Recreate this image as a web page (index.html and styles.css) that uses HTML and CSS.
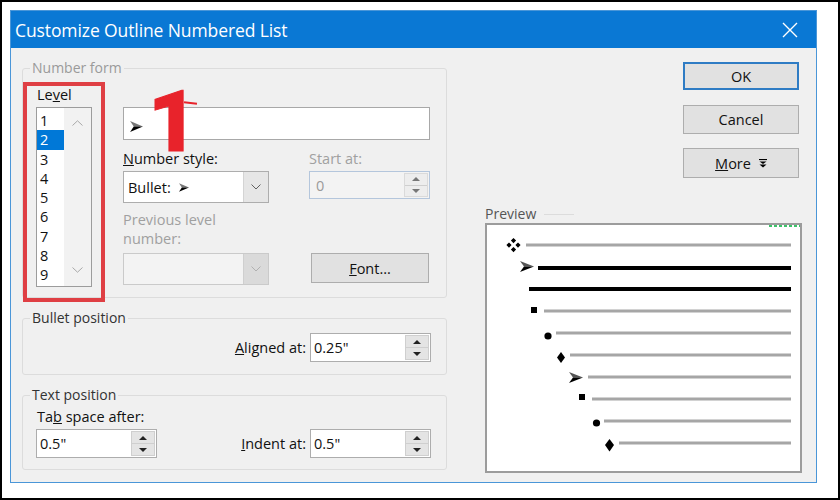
FILE: index.html
```html
<!DOCTYPE html>
<html lang="en">
    <head>
        <meta charset="utf-8">
        <title>Customize Outline Numbered List</title>
        <link rel="stylesheet" href="styles.css">
    </head>
    <body>
        <div class="frame">
        <div class="dialog">

            <div class="titlebar">
                <span class="title">Customize Outline Numbered List</span>
                <svg class="close" width="16" height="16" viewBox="0 0 16 16">
                    <path d="M1 1 L15 15 M15 1 L1 15" stroke="#fff" stroke-width="1.4" fill="none"/>
                </svg>
            </div>

            <div class="dlg-body">
                <div class="left">

                    <fieldset class="group number-form">
                        <legend class="off">Number form</legend>
                        <div class="nf-row">
                            <div class="level-box">
                                <div class="lbl">Le<u>v</u>el</div>
                                <div class="listbox">
                                    <div class="items">
                                        <div>1</div>
                                        <div class="sel">2</div>
                                        <div>3</div>
                                        <div>4</div>
                                        <div>5</div>
                                        <div>6</div>
                                        <div>7</div>
                                        <div>8</div>
                                        <div>9</div>
                                    </div>
                                    <div class="vscroll">
                                        <svg width="11" height="6" viewBox="0 0 11 6"><path d="M0.5 5.5 L5.5 0.8 L10.5 5.5" stroke="#a8a8a8" fill="none"/></svg>
                                        <svg width="11" height="6" viewBox="0 0 11 6"><path d="M0.5 0.5 L5.5 5.2 L10.5 0.5" stroke="#a8a8a8" fill="none"/></svg>
                                    </div>
                                </div>
                            </div>

                            <div class="nf-form">
                                <div class="textbox">
                                    <svg class="arrow" width="13" height="11" viewBox="0 0 14 12">
                                        <polygon points="0,0 14,6 4,6" fill="#777"/>
                                        <polygon points="4,6 14,6 0,12" fill="#000"/>
                                    </svg>
                                </div>
                                <div class="nf-grid">
                                    <div class="lbl"><u>N</u>umber style:</div>
                                    <div class="lbl off">Start at:</div>

                                    <div class="combo">
                                        <span class="combo-val">Bullet:
                                            <svg class="arrow" width="10" height="9" viewBox="0 0 14 12">
                                                <polygon points="0,0 14,6 4,6" fill="#777"/>
                                                <polygon points="4,6 14,6 0,12" fill="#000"/>
                                            </svg>
                                        </span>
                                        <span class="drop">
                                            <svg width="10" height="6" viewBox="0 0 10 6"><path d="M0.5 0.5 L5 5 L9.5 0.5" stroke="#606060" fill="none"/></svg>
                                        </span>
                                    </div>
                                    <div class="spin off-spin">
                                        <span class="val">0</span>
                                        <span class="spin-btns"><span class="up"></span><span class="dn"></span></span>
                                    </div>

                                    <div class="lbl off two">Previous level<br>number:</div>
                                    <div></div>

                                    <div class="combo off-combo">
                                        <span class="combo-val"></span>
                                        <span class="drop">
                                            <svg width="10" height="6" viewBox="0 0 10 6"><path d="M0.5 0.5 L5 5 L9.5 0.5" stroke="#b0b0b0" fill="none"/></svg>
                                        </span>
                                    </div>
                                    <div class="btn font-btn"><span><u>F</u>ont...</span></div>
                                </div>
                            </div>
                            <span class="mark">1</span>
                        </div>
                    </fieldset>

                    <fieldset class="group bullet-pos">
                        <legend>Bullet position</legend>
                        <div class="row-right">
                            <span class="lbl"><u>A</u>ligned at:</span>
                            <div class="spin">
                                <span class="val">0.25&quot;</span>
                                <span class="spin-btns"><span class="up"></span><span class="dn"></span></span>
                            </div>
                        </div>
                    </fieldset>

                    <fieldset class="group text-pos">
                        <legend>Text position</legend>
                        <div class="tp-inner">
                            <div class="lbl tab-lbl">Ta<u>b</u> space after:</div>
                            <div class="tp-row">
                                <div class="spin">
                                    <span class="val">0.5&quot;</span>
                                    <span class="spin-btns"><span class="up"></span><span class="dn"></span></span>
                                </div>
                                <span class="lbl indent-lbl"><u>I</u>ndent at:</span>
                                <div class="spin">
                                    <span class="val">0.5&quot;</span>
                                    <span class="spin-btns"><span class="up"></span><span class="dn"></span></span>
                                </div>
                            </div>
                        </div>
                    </fieldset>

                </div>

                <div class="right">
                    <div class="btns">
                        <div class="btn ok">OK</div>
                        <div class="btn cancel">Cancel</div>
                        <div class="btn more"><span><u>M</u>ore</span>
                            <svg width="8" height="9" viewBox="0 0 8 9">
                                <path d="M0 0.5 H8" stroke="#000" stroke-width="1.2"/>
                                <path d="M0.5 2.5 L4 5 L7.5 2.5 Z M0.5 5.5 L4 8.5 L7.5 5.5 Z" fill="#000"/>
                            </svg>
                        </div>
                    </div>

                    <div class="preview-lbl">Preview<span class="pv-line"></span></div>
                    <div class="preview">
                        <svg width="313" height="246" viewBox="2 2 313 246">
                            <defs>
                                <g id="dart">
                                    <polygon points="0,0 14,5.5 4,5.5" fill="#555"/>
                                    <polygon points="4,5.5 14,5.5 0,11" fill="#000"/>
                                </g>
                            </defs>
                            <path d="M284 3 H316" stroke="#3cc26a" stroke-width="2" stroke-dasharray="3 2"/>

                            <g fill="#000">
                                <path d="M28.5 15 l2.6 2.6 -2.6 2.6 -2.6 -2.6z M28.5 24 l2.6 2.6 -2.6 2.6 -2.6 -2.6z M24 19.5 l2.6 2.6 -2.6 2.6 -2.6 -2.6z M33 19.5 l2.6 2.6 -2.6 2.6 -2.6 -2.6z"/>
                            </g>
                            <line x1="41" y1="22" x2="306" y2="22" stroke="#a6a6a6" stroke-width="3"/>

                            <use href="#dart" x="35" y="38"/>
                            <line x1="53" y1="45" x2="306" y2="45" stroke="#000" stroke-width="4"/>

                            <line x1="44" y1="66" x2="306" y2="66" stroke="#000" stroke-width="4"/>

                            <rect x="46" y="84" width="6" height="6" fill="#000"/>
                            <line x1="59" y1="88" x2="306" y2="88" stroke="#a6a6a6" stroke-width="3"/>

                            <circle cx="63" cy="113" r="3.6" fill="#000"/>
                            <line x1="71" y1="110" x2="306" y2="110" stroke="#a6a6a6" stroke-width="3"/>

                            <path d="M76 129 L80 134.5 L76 140 L72 134.5 Z" fill="#000"/>
                            <line x1="85" y1="132" x2="306" y2="132" stroke="#a6a6a6" stroke-width="3"/>

                            <use href="#dart" x="84" y="149"/>
                            <line x1="103" y1="154" x2="306" y2="154" stroke="#a6a6a6" stroke-width="3"/>

                            <rect x="94" y="171" width="6" height="6" fill="#000"/>
                            <line x1="107" y1="176" x2="306" y2="176" stroke="#a6a6a6" stroke-width="3"/>

                            <circle cx="111.5" cy="200" r="3.6" fill="#000"/>
                            <line x1="119" y1="198" x2="306" y2="198" stroke="#a6a6a6" stroke-width="3"/>

                            <path d="M124.5 216 L129 222 L124.5 228.5 L120 222 Z" fill="#000"/>
                            <line x1="134" y1="220" x2="306" y2="220" stroke="#a6a6a6" stroke-width="3"/>
                        </svg>
                    </div>
                </div>
            </div>

        </div>
        </div>
    </body>
</html>
```

FILE: styles.css
```css
* {
    box-sizing: border-box;
}
html, body {
    margin: 0;
    padding: 0;
    background: #fff;
}
body {
    font-family: "Open Sans", "Noto Sans", sans-serif;
    font-size: 14.5px;
    color: #111;
}

.frame {
    width: 840px;
    height: 500px;
    border: 2px solid #000;
    padding: 8px;
    background: #fff;
}

.dialog {
    width: 807px;
    height: 473px;
    border: 1px solid #4a96d8;
    background: #f0f0f0;
    display: flex;
    flex-direction: column;
}

.titlebar {
    height: 37px;
    background: #0a78d4;
    color: #fff;
    display: flex;
    align-items: center;
    justify-content: space-between;
    padding: 0 18px 0 4px;
}
.title {
    font-size: 17.5px;
    letter-spacing: -0.1px;
}

.dlg-body {
    flex: 1;
    display: flex;
    padding: 12px 14px 0 11px;
}

.left {
    width: 425px;
}
.right {
    margin-left: auto;
    width: 317px;
    display: flex;
    flex-direction: column;
}

/* group boxes */
.group {
    margin: 0;
    padding: 0;
    border: 1px solid #dcdcdc;
    border-radius: 3px;
    min-width: 0;
}
.group legend {
    margin-left: 7px;
    padding: 0 2px;
    font-size: 14px;
    line-height: 16px;
    color: #333;
}
.group legend.off {
    color: #9a9a9a;
}

.lbl {
    line-height: 18px;
    white-space: nowrap;
}
.off {
    color: #a0a0a0;
}

/* number form */
.nf-row {
    display: flex;
    align-items: flex-start;
    margin-top: 6px;
    position: relative;
}
.level-box {
    border: 4px solid #df3f44;
    padding: 0 9px 11px 9px;
    margin-bottom: -5px;
}
.level-box .lbl {
    padding-left: 1px;
    margin-bottom: 3px;
}
.listbox {
    width: 56px;
    height: 180px;
    border: 1px solid #9c9c9c;
    background: #fff;
    display: flex;
}
.items {
    width: 27px;
    padding-top: 3px;
}
.items div {
    height: 19.25px;
    line-height: 19.25px;
    padding-left: 3px;
}
.items .sel {
    background: #0078d7;
    color: #fff;
}
.vscroll {
    flex: 1;
    background: #f2f2f2;
    display: flex;
    flex-direction: column;
    justify-content: space-between;
    align-items: center;
    padding: 12px 0 13px;
}

.nf-form {
    width: 307px;
    margin-left: 18px;
    margin-top: 25px;
}
.textbox {
    height: 33px;
    border: 1px solid #a8a8a8;
    background: #fff;
    padding: 9px 0 0 6px;
}
.arrow {
    display: inline-block;
}

.nf-grid {
    display: grid;
    grid-template-columns: 146px 121px;
    column-gap: 40px;
    margin-top: 10px;
    align-items: start;
}
.nf-grid .lbl {
    margin-bottom: 3px;
}
.nf-grid .two {
    line-height: 19px;
    margin-top: 7px;
    margin-bottom: 5px;
}

.combo {
    height: 32px;
    border: 1px solid #adadad;
    background: #fff;
    display: flex;
}
.combo-val {
    flex: 1;
    display: flex;
    align-items: center;
    gap: 8px;
    padding-left: 4px;
}
.drop {
    width: 25px;
    background: #e6e6e6;
    border-left: 1px solid #d4d4d4;
    display: flex;
    align-items: center;
    justify-content: center;
}
.off-combo {
    border-color: #cacaca;
    background: #f3f3f3;
}
.off-combo .drop {
    background: #dadada;
    border-left-color: #cfcfcf;
}

/* spin boxes */
.spin {
    width: 121px;
    height: 29px;
    border: 1px solid #adadad;
    background: #fff;
    display: flex;
}
.spin .val {
    flex: 1;
    padding-left: 3px;
    line-height: 27px;
}
.spin-btns {
    width: 24px;
    margin: 1px;
    background: #e4e4e4;
    border: 1px solid #cfcfcf;
    display: flex;
    flex-direction: column;
}
.spin-btns span {
    flex: 1;
    display: flex;
    align-items: center;
    justify-content: center;
}
.spin-btns .up {
    border-bottom: 1px solid #cfcfcf;
}
.spin-btns .up::after {
    content: "";
    border-left: 4px solid transparent;
    border-right: 4px solid transparent;
    border-bottom: 4px solid #222;
}
.spin-btns .dn::after {
    content: "";
    border-left: 4px solid transparent;
    border-right: 4px solid transparent;
    border-top: 4px solid #222;
}
.off-spin {
    height: 28px;
    border-color: #b4c6dc;
    background: #f3f3f3;
}
.off-spin .val {
    color: #9a9a9a;
    padding-left: 6px;
}
.off-spin .spin-btns {
    background: #ededed;
    border-color: #dadada;
}
.off-spin .spin-btns .up::after {
    border-bottom-color: #777;
}
.off-spin .spin-btns .dn::after {
    border-top-color: #777;
}

/* buttons */
.btn {
    width: 116px;
    height: 28px;
    background: #e1e1e1;
    border: 1px solid #adadad;
    display: flex;
    align-items: center;
    justify-content: center;
    gap: 8px;
    color: #111;
}
.font-btn {
    width: 118px;
    height: 30px;
    margin-left: 2px;
}
.btns {
    display: flex;
    flex-direction: column;
    align-items: flex-end;
    padding-right: 3px;
}
.ok {
    margin-top: 2px;
    border: 2px solid #2f7cc4;
}
.cancel {
    margin-top: 15px;
    height: 29px;
}
.more {
    margin-top: 14px;
    height: 30px;
}

/* annotation */
.mark {
    position: absolute;
    left: 125px;
    top: -3px;
    font-family: Roboto, "Liberation Sans", sans-serif;
    font-weight: 900;
    font-size: 86px;
    line-height: 86px;
    color: #e8232b;
    -webkit-text-stroke: 1px #e8232b;
}
.mark::after {
    content: "";
    position: absolute;
    left: 36px;
    top: 23px;
    width: 13px;
    height: 2px;
    background: #e8232b;
    transform: rotate(6deg);
}

/* bullet / text position */
.bullet-pos {
    margin-top: 12px;
}
.row-right {
    display: flex;
    justify-content: flex-end;
    align-items: center;
    gap: 4px;
    padding: 7px 15px 12px 0;
}
.text-pos {
    margin-top: 12px;
}
.tp-inner {
    padding: 5px 15px 11px 13px;
}
.tab-lbl {
    padding-left: 1px;
    margin-bottom: 3px;
}
.tp-row {
    display: flex;
    align-items: center;
}
.tp-row .spin:last-child {
    margin-left: 4px;
}
.indent-lbl {
    margin-left: auto;
}

/* preview */
.preview-lbl {
    margin-top: 28px;
    line-height: 16px;
    font-size: 14px;
    color: #555;
    display: flex;
    align-items: center;
}
.pv-line {
    width: 30px;
    height: 1px;
    margin-left: 8px;
    background: #dcdcdc;
}
.preview {
    width: 317px;
    height: 250px;
    margin-top: 1px;
    border: 2px solid #9c9c9c;
    background: #fff;
}
.preview svg {
    display: block;
}
```
